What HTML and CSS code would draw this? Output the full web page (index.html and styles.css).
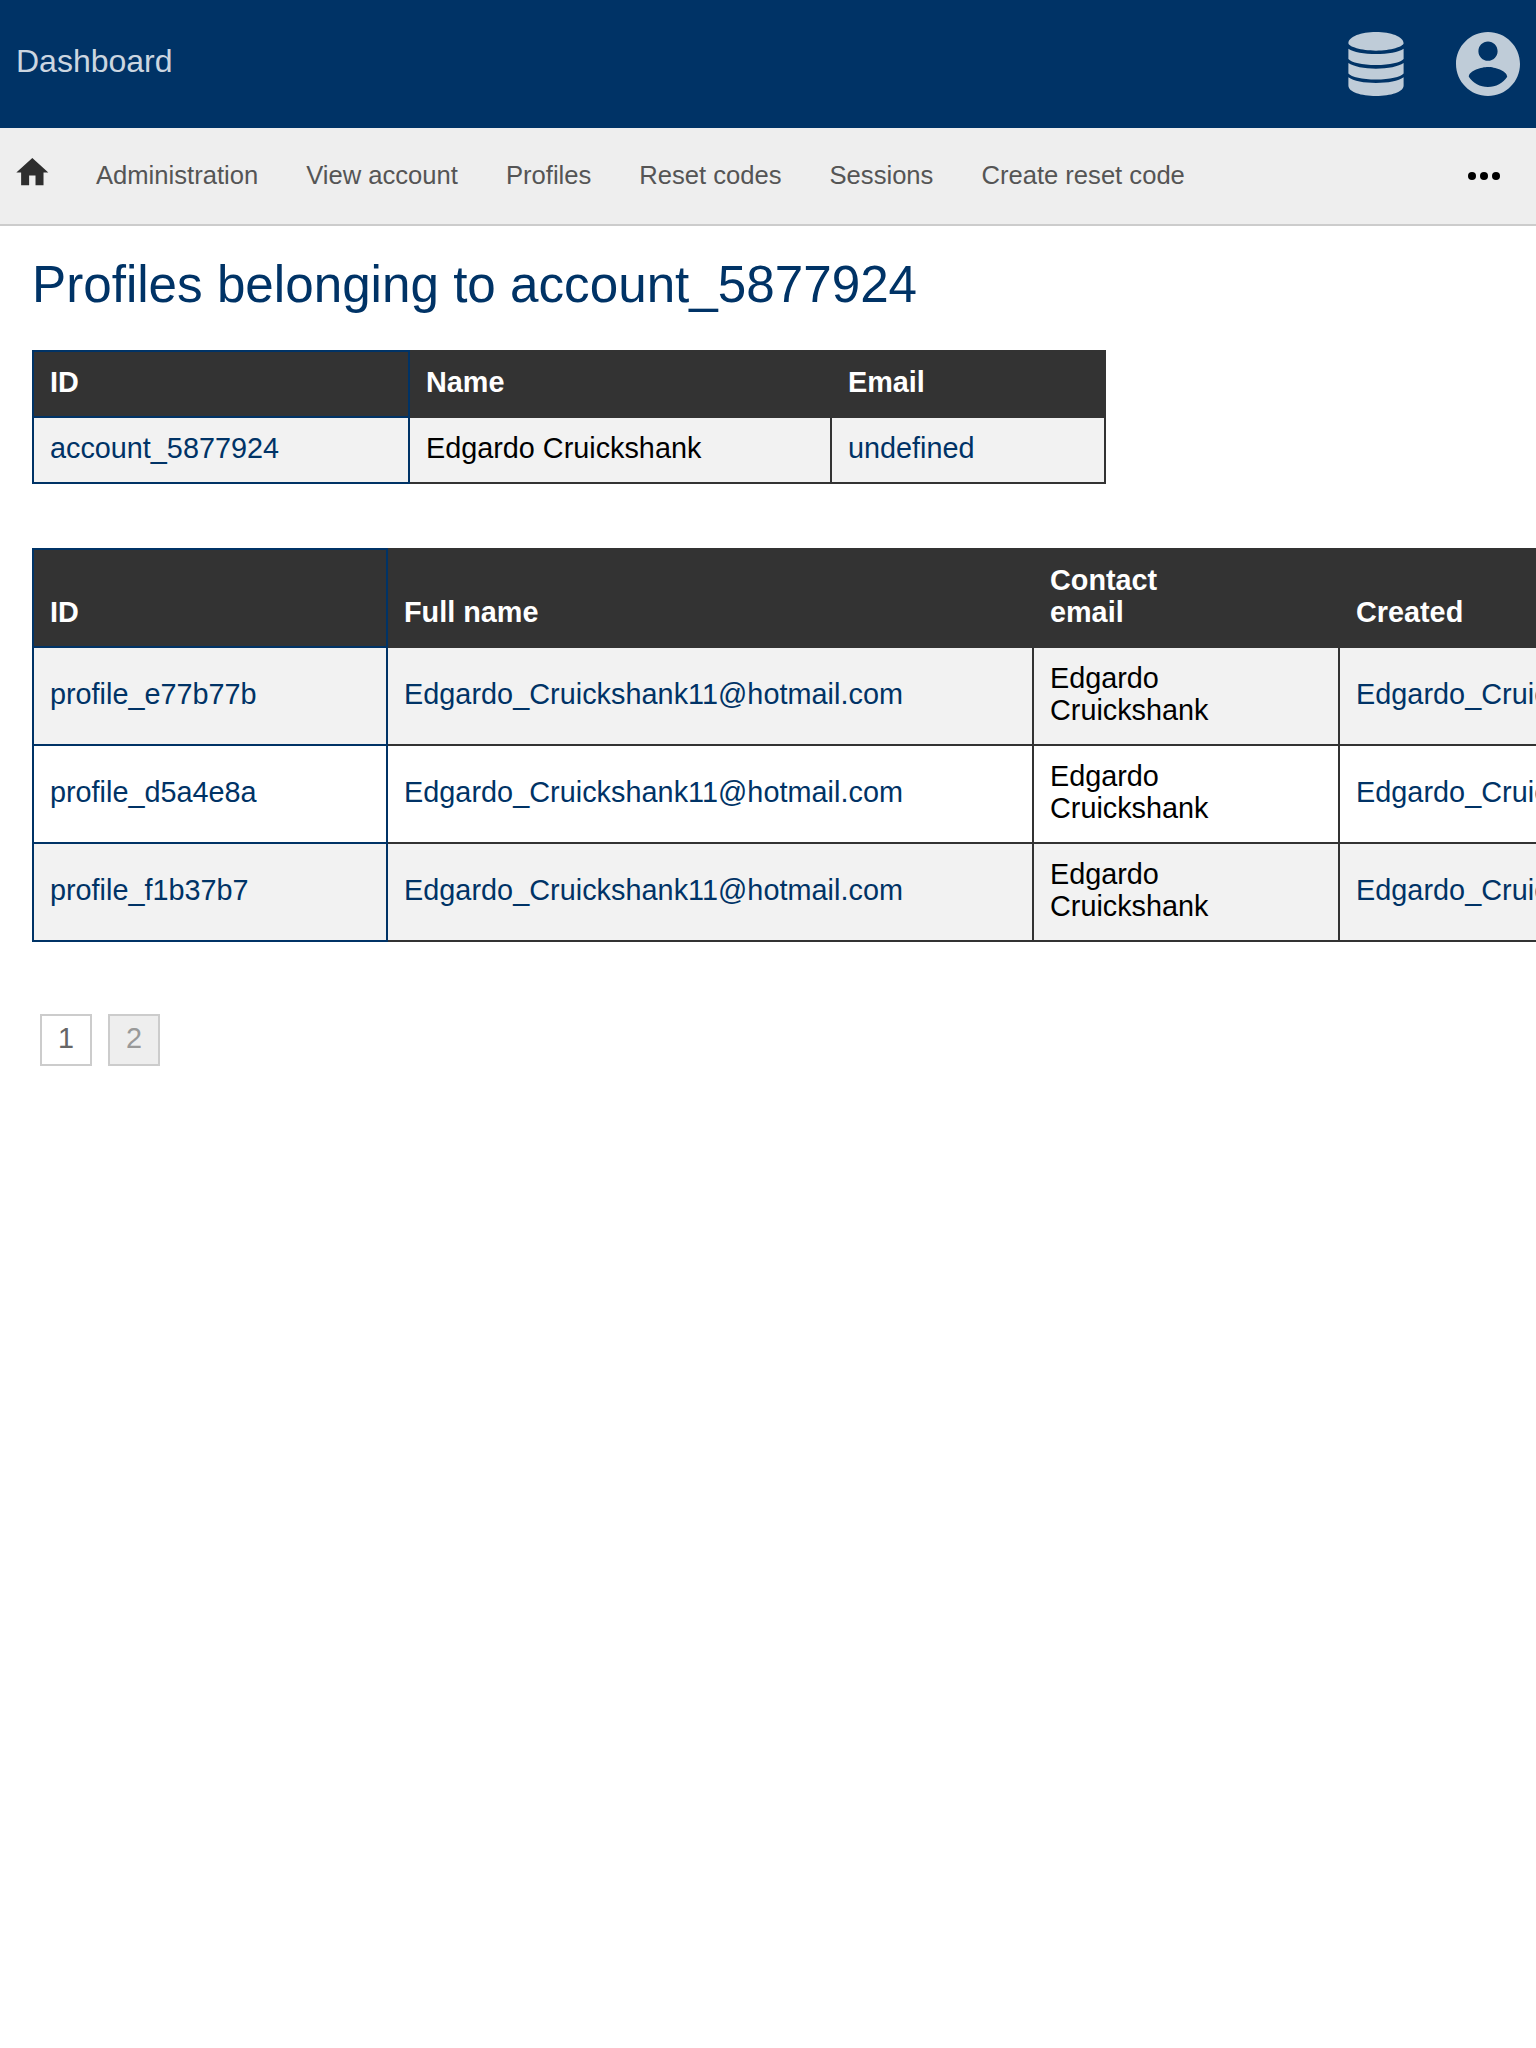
FILE: index.html
```html
<!DOCTYPE html>
<html lang="en">
<head>
<meta charset="utf-8">
<title>Dashboard</title>
<link rel="stylesheet" href="styles.css">
</head>
<body>
<header class="header">
  <a class="brand">Dashboard</a>
  <div class="menus">
    <svg class="icon-db" viewBox="-.4 0 56.8 64" preserveAspectRatio="none"><path d="M28 0C43 0 56 4.500 56 11.300C56 14.500 43 18.700 28 18.700S0 14.500 0 11.300C0 4.500 13 0 28 0zM0 16.700C5 20 16 22 28 22S51 20 56 16.700V27C53 30.500 42 33 28 33S3 30.500 0 27zM0 31C5 34.500 16 36.700 28 36.700S51 34.500 56 31V41.500C53 45 42 47.500 28 47.500S3 45 0 41.500zM0 45.300C5 49 16 51 28 51S51 49 56 45.300V53.500C56 60 43 64 28 64S0 60 0 53.500z"/></svg>
    <svg class="icon-user" viewBox="2 2 20 20"><path d="M12 2C6.480 2 2 6.480 2 12s4.480 10 10 10 10-4.480 10-10S17.520 2 12 2zm0 3c1.660 0 3 1.340 3 3s-1.340 3-3 3-3-1.340-3-3 1.340-3 3-3zm0 14.200c-2.500 0-4.710-1.280-6-3.220.03-1.990 4-3.080 6-3.080 1.990 0 5.970 1.090 6 3.080-1.290 1.940-3.500 3.220-6 3.220z"/></svg>
  </div>
</header>
<nav class="nav">
  <svg class="icon-home" viewBox="1.800 3 20 17"><path d="M10 20v-6h4v6h5v-8h3L12 3 2 12h3v8z"/></svg>
  <a>Administration</a>
  <a>View account</a>
  <a>Profiles</a>
  <a>Reset codes</a>
  <a>Sessions</a>
  <a>Create reset code</a>
  <svg class="icon-more" viewBox="0 0 32 8"><circle cx="4" cy="4" r="4"/><circle cx="16" cy="4" r="4"/><circle cx="28" cy="4" r="4"/></svg>
</nav>
<main class="content">
  <h1>Profiles belonging to account_5877924</h1>
  <table class="account">
    <colgroup><col class="a-id"><col class="a-name"><col class="a-email"></colgroup>
    <thead><tr><th>ID</th><th>Name</th><th>Email</th></tr></thead>
    <tbody><tr><td><a>account_5877924</a></td><td>Edgardo Cruickshank</td><td><a>undefined</a></td></tr></tbody>
  </table>
  <table class="profiles">
    <colgroup><col class="p-id"><col class="p-name"><col class="p-email"><col class="p-created"></colgroup>
    <thead><tr><th>ID</th><th>Full name</th><th>Contact<br>email</th><th>Created</th></tr></thead>
    <tbody>
      <tr><td><a>profile_e77b77b</a></td><td><a class="mail">Edgardo_Cruickshank11@hotmail.com</a></td><td>Edgardo<br>Cruickshank</td><td><a class="mail">Edgardo_Cruickshank11@hotmail.com</a></td></tr>
      <tr><td><a>profile_d5a4e8a</a></td><td><a class="mail">Edgardo_Cruickshank11@hotmail.com</a></td><td>Edgardo<br>Cruickshank</td><td><a class="mail">Edgardo_Cruickshank11@hotmail.com</a></td></tr>
      <tr><td><a>profile_f1b37b7</a></td><td><a class="mail">Edgardo_Cruickshank11@hotmail.com</a></td><td>Edgardo<br>Cruickshank</td><td><a class="mail">Edgardo_Cruickshank11@hotmail.com</a></td></tr>
    </tbody>
  </table>
  <div class="pages"><a class="page">1</a><a class="page current">2</a></div>
</main>
</body>
</html>
```
FILE: styles.css
```css
* { box-sizing: border-box; }
body {
  margin: 0;
  overflow: hidden;
  background: #fff;
  color: #000;
  font: 28.8px/32px "Liberation Sans", Arial, sans-serif;
}
.header {
  display: flex;
  justify-content: space-between;
  height: 128px;
  padding: 32px 16px;
  background: #036;
}
.brand {
  padding-top: 11px;
  color: #ccd6e0;
  font-size: 32px;
  line-height: 36px;
}
.menus { display: flex; gap: 52px; fill: #bfccd8; }
.icon-db { width: 56px; height: 64px; }
.icon-user { width: 64px; height: 64px; }
.nav {
  display: flex;
  align-items: center;
  gap: 48px;
  height: 98px;
  padding: 0 36px 0 16px;
  border-bottom: 2px solid #ccc;
  background: #eee;
  color: #555;
  font-size: 25.6px;
}
.nav a { padding-bottom: 2px; }
.icon-home { width: 32px; height: 27.2px; margin-bottom: 8px; fill: #2e2e2e; overflow: visible; }
.icon-more { width: 32px; height: 8px; margin-left: auto; }
.content { padding: 29px 32px; }
h1 {
  margin: 0 0 35px;
  color: #036;
  font-size: 51.2px;
  font-weight: 400;
  line-height: 60px;
}
table { border-collapse: collapse; table-layout: fixed; }
th, td {
  padding: 14px 16px 18px;
  border: 2px solid #333;
  text-align: left;
}
th { background: #333; color: #fff; vertical-align: bottom; }
tbody tr:nth-child(odd) { background: #f2f2f2; }
th:first-child, td:first-child { border-color: #036; }
td:first-child + td, th:first-child + th { border-left-color: #036; }
td a { color: #036; }
.mail { letter-spacing: .04px; }
.account { width: 1074px; margin-bottom: 64px; }
.a-id { width: 376px; }
.a-name { width: 422px; }
.a-email { width: 274px; }
.profiles { width: 1954px; }
.p-id { width: 354px; }
.p-name { width: 646px; }
.p-email { width: 306px; }
.p-created { width: 646px; }
.pages { display: flex; gap: 16px; margin: 72px 8px; }
.page {
  width: 52px;
  height: 52px;
  padding-top: 6px;
  border: 2px solid #ccc;
  color: #666;
  text-align: center;
}
.current { background: #eee; color: #999; }
```
